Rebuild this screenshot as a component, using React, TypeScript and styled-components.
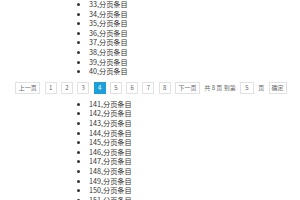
import React from 'react';
import styled, { createGlobalStyle } from 'styled-components';

const GlobalStyle = createGlobalStyle`
  html, body {
    margin: 0;
    padding: 0;
    background: #fff;
    overflow: hidden;
  }
  body {
    font-family: "Noto Sans CJK SC", "Noto Sans", sans-serif;
    color: #333;
  }
`;

const topItems = [33, 34, 35, 36, 37, 38, 39, 40];
const bottomItems = Array.from({ length: 11 }, (_, i) => 141 + i);
const pages = [1, 2, 3, 4, 5, 6, 7, 8];

const App = () => {
  return (
    <>
      <GlobalStyle />
      <Wrap>
        <List>
          {topItems.map((n) => (
            <Item key={n}>{n},分页条目</Item>
          ))}
        </List>
        <Pager>
          <PageBtn wide>上一页</PageBtn>
          {pages.map((p) => (
            <PageBtn key={p} active={p === 4}>
              {p}
            </PageBtn>
          ))}
          <PageBtn wide>下一页</PageBtn>
          <Info>共 8 页 到第</Info>
          <JumpInput defaultValue="5" />
          <Info>页</Info>
          <PageBtn>确定</PageBtn>
        </Pager>
        <List>
          {bottomItems.map((n) => (
            <Item key={n}>{n},分页条目</Item>
          ))}
        </List>
      </Wrap>
    </>
  );
};

const Wrap = styled.div`
  width: 300px;
  height: 200px;
  overflow: hidden;
`;

const List = styled.ul`
  margin: 0 0 0 65px;
  padding: 0 0 0 24px;
  list-style: disc;
`;

const Item = styled.li`
  font-size: 7.2px;
  line-height: 9.6px;
  height: 9.6px;
  color: #333;
`;

const Pager = styled.div`
  display: flex;
  align-items: center;
  justify-content: center;
  gap: 4.3px;
  margin: 5px 0 6px;
  padding-left: 2px;
  font-size: 6px;
  color: #666;
`;

const PageBtn = styled.span<{ active?: boolean; wide?: boolean }>`
  display: flex;
  align-items: center;
  justify-content: center;
  box-sizing: border-box;
  height: 12px;
  min-width: ${(p) => (p.wide ? '25px' : '12px')};
  padding: 0 2px;
  border: 1px solid ${(p) => (p.active ? '#1e9fd8' : '#e2e2e2')};
  background: ${(p) => (p.active ? '#1e9fd8' : '#fff')};
  color: ${(p) => (p.active ? '#fff' : '#666')};
`;

const Info = styled.span`
  white-space: nowrap;
`;

const JumpInput = styled.input`
  box-sizing: border-box;
  width: 14px;
  height: 12px;
  padding: 0;
  border: 1px solid #e2e2e2;
  font: inherit;
  font-size: 6px;
  color: #666;
  text-align: center;
  outline: none;
`;

export default App;
